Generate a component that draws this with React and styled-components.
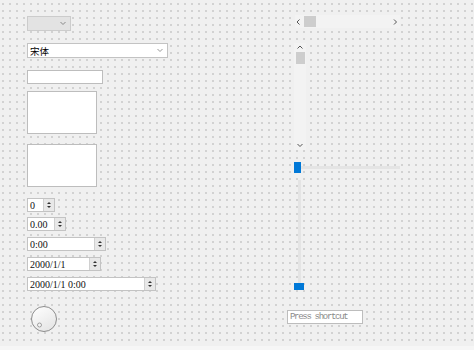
import React from 'react'
import styled, { createGlobalStyle } from 'styled-components'

const Global = createGlobalStyle`
html,body{margin:0;padding:0;}
body{background:#f0f0f0;font-family:"Liberation Serif",serif;}
`

const Form = styled.div`
width:474px;
height:346px;
display:grid;
grid-template-columns:287px 1fr;
background-color:#f0f0f0;
background-image:radial-gradient(circle at 1px 1px,#d2d2d2 0.8px,transparent 1px);
background-size:7px 7px;
background-position:2px 3px;
border-bottom:4px solid #f6f6f6;
overflow:hidden;
`
const LeftCol = styled.div`
display:flex;
flex-direction:column;
align-items:flex-start;
padding-left:27px;
`
const RightCol = styled.div`
display:flex;
flex-direction:column;
align-items:flex-start;
`
const Combo = styled.div`
margin-top:${p=>p.$mt}px;
width:${p=>p.$w}px;
height:15px;
box-sizing:border-box;
border:1px solid ${p=>p.$disabled ? '#cccccc' : '#c3c3c3'};
background:${p=>p.$disabled ? '#e3e3e3' : '#ffffff'};
display:flex;
align-items:center;
justify-content:space-between;
padding:0 4px 0 2px;
font-family:"Noto Sans CJK SC",sans-serif;
font-size:9.5px;
color:#000;
`
const Chevron = ({dir='down',color='#777'}) => {
  const d = {
    down:'M0.5 1 L3 3.5 L5.5 1',
    up:'M0.5 3.5 L3 1 L5.5 3.5',
    left:'M3.5 0.5 L1 3 L3.5 5.5',
    right:'M1 0.5 L3.5 3 L1 5.5',
  }[dir]
  return (
    <svg width="6" height="6" viewBox="0 0 6 6">
      <path d={d} fill="none" stroke={color} strokeWidth="1"/>
    </svg>
  )
}
const LineEdit = styled.div`
margin-top:${p=>p.$mt}px;
width:${p=>p.$w}px;
height:${p=>p.$h}px;
box-sizing:border-box;
border:1px solid #bdbdbd;
background:#fff;
display:flex;
align-items:center;
padding-left:2px;
font-size:9px;
color:${p=>p.$placeholder ? '#8a8a8a' : '#000'};
font-family:"Liberation Mono",monospace;
letter-spacing:-1.3px;
`
const Spin = styled.div`
margin-top:${p=>p.$mt}px;
width:${p=>p.$w}px;
height:14px;
box-sizing:border-box;
border:1px solid #c3c3c3;
background:#fff;
display:flex;
`
const SpinText = styled.div`
flex:1;
display:flex;
align-items:center;
padding-left:2px;
font-size:10px;
color:#111;
`
const SpinButtons = styled.div`
width:10px;
background:#e8e8e8;
border-left:1px solid #d0d0d0;
display:flex;
flex-direction:column;
align-items:center;
justify-content:center;
gap:2px;
`
const Tri = styled.div`
width:0;height:0;
border-left:2px solid transparent;
border-right:2px solid transparent;
${p=>p.$up ? 'border-bottom:2px solid #333;' : 'border-top:2px solid #333;'}
`
const DialWrap = styled.div`
margin-top:14px;
margin-left:3px;
width:28px;
height:28px;
`
const HScroll = styled.div`
margin-top:15px;
margin-left:8px;
width:105px;
height:13px;
background:#f3f3f3;
display:flex;
align-items:center;
padding:0 1px;
box-sizing:border-box;
`
const HHandle = styled.div`
width:12px;
height:11px;
background:#cdcdcd;
margin-left:2px;
`
const Spacer = styled.div`flex:1;`
const VScroll = styled.div`
margin-top:15px;
margin-left:7px;
width:12px;
height:107px;
background:#f3f3f3;
display:flex;
flex-direction:column;
align-items:center;
padding:2px 0 1px;
box-sizing:border-box;
`
const VHandle = styled.div`
width:9px;
height:12px;
background:#cdcdcd;
margin-top:1px;
`
const HSlider = styled.div`
margin-top:12px;
margin-left:7px;
width:106px;
height:11px;
display:flex;
align-items:center;
`
const SliderHandle = styled.div`
width:${p=>p.$w}px;
height:${p=>p.$h}px;
background:#0078d7;
flex-shrink:0;
`
const HGroove = styled.div`
flex:1;
height:3px;
background:#e4e4e4;
`
const VSlider = styled.div`
margin-top:7px;
margin-left:7px;
width:10px;
height:110px;
display:flex;
flex-direction:column;
align-items:center;
`
const VGroove = styled.div`
flex:1;
width:3px;
background:#e4e4e4;
`

const SpinBox = ({mt,w,value}) => (
  <Spin $mt={mt} $w={w}>
    <SpinText>{value}</SpinText>
    <SpinButtons><Tri $up/><Tri/></SpinButtons>
  </Spin>
)

export default function App(){
  return (
    <>
      <Global/>
      <Form>
        <LeftCol>
          <Combo $mt={16} $w={44} $disabled><span/><Chevron color="#888"/></Combo>
          <Combo $mt={12} $w={141}><span>宋体</span><Chevron color="#999"/></Combo>
          <LineEdit $mt={12} $w={76} $h={14}/>
          <LineEdit $mt={7} $w={70} $h={43}/>
          <LineEdit $mt={10} $w={70} $h={43}/>
          <SpinBox mt={11} w={28} value="0"/>
          <SpinBox mt={5} w={39} value="0.00"/>
          <SpinBox mt={6} w={79} value="0:00"/>
          <SpinBox mt={6} w={74} value="2000/1/1"/>
          <SpinBox mt={6} w={129} value="2000/1/1 0:00"/>
          <DialWrap>
            <svg width="28" height="28" viewBox="0 0 28 28">
              <defs>
                <linearGradient id="dg" x1="0" y1="0" x2="0.6" y2="1">
                  <stop offset="0" stopColor="#ffffff"/>
                  <stop offset="1" stopColor="#e6e6e6"/>
                </linearGradient>
              </defs>
              <circle cx="14" cy="14" r="12.5" fill="url(#dg)" stroke="#8c8c8c" strokeWidth="1"/>
              <circle cx="9.5" cy="20" r="2" fill="#f4f4f4" stroke="#8c8c8c" strokeWidth="0.8"/>
            </svg>
          </DialWrap>
        </LeftCol>
        <RightCol>
          <HScroll>
            <Chevron dir="left" color="#555"/>
            <HHandle/>
            <Spacer/>
            <Chevron dir="right" color="#555"/>
          </HScroll>
          <VScroll>
            <Chevron dir="up" color="#555"/>
            <VHandle/>
            <Spacer/>
            <Chevron dir="down" color="#555"/>
          </VScroll>
          <HSlider>
            <SliderHandle $w={7} $h={11}/>
            <HGroove/>
          </HSlider>
          <VSlider>
            <VGroove/>
            <SliderHandle $w={10} $h={7}/>
          </VSlider>
          <LineEdit $mt={20} $w={76} $h={14} $placeholder>Press shortcut</LineEdit>
        </RightCol>
      </Form>
    </>
  )
}
